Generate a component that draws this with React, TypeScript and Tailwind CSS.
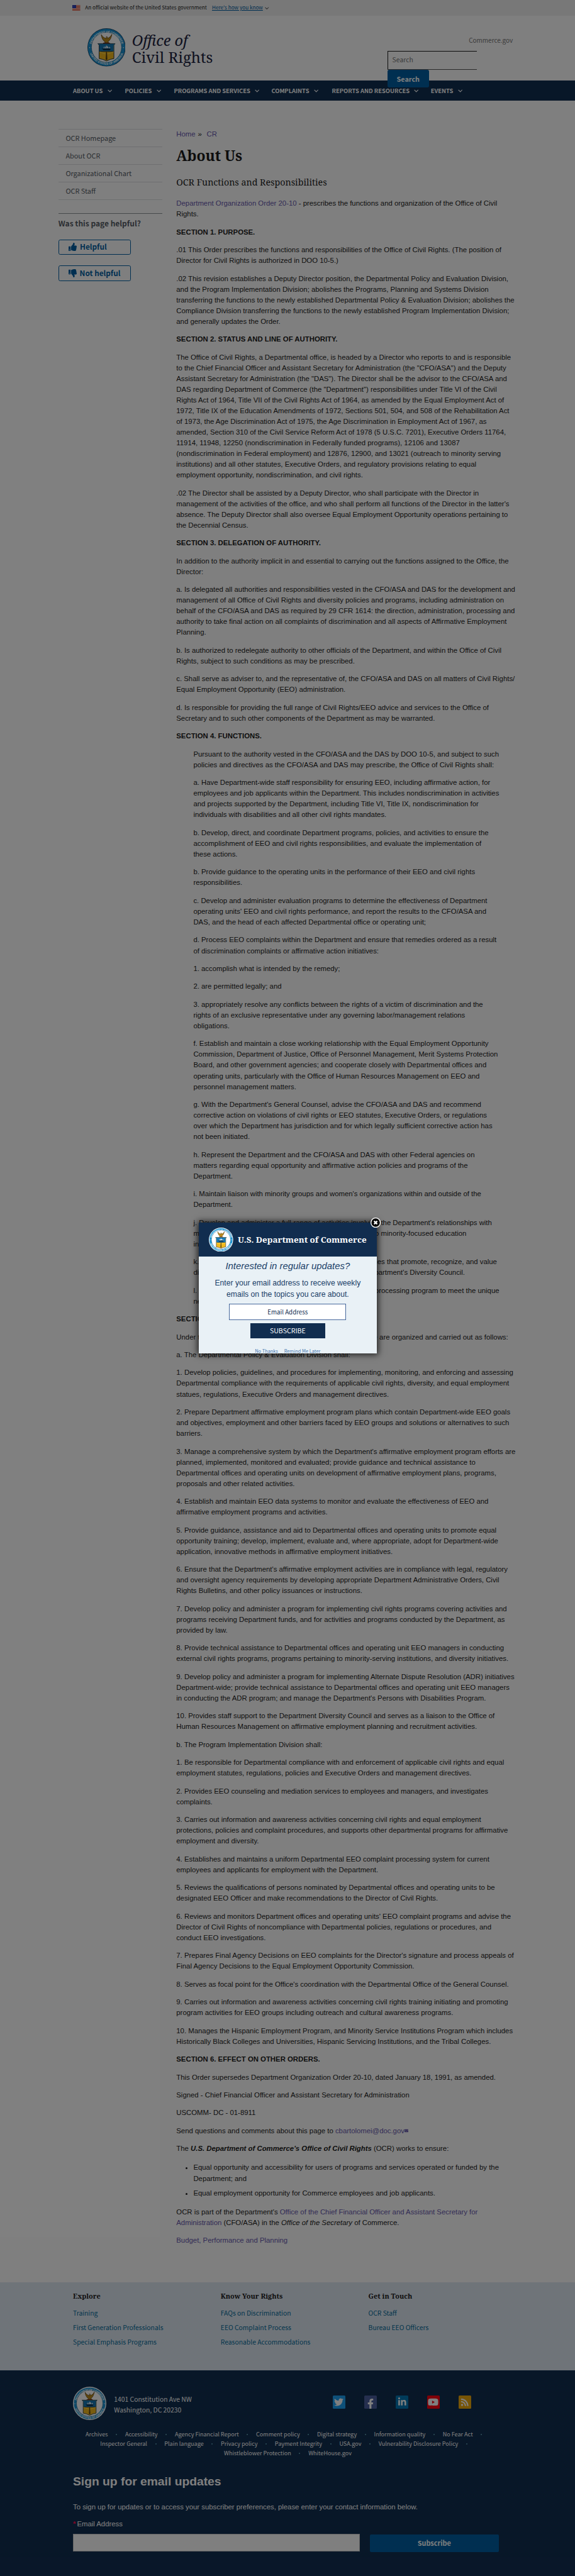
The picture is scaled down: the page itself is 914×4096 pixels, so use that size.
import { FaEnvelope, FaFacebookF, FaLinkedinIn, FaRss, FaThumbsDown, FaThumbsUp, FaTwitter, FaYoutube } from "react-icons/fa";
import type { ReactNode } from "react";

function Seal({ id, className, white }: { id: string; className: string; white?: boolean }) {
  return (
    <svg viewBox="0 0 268 268" className={className}>
      <circle cx="134" cy="134" r="134" fill={white ? "#ffffff" : "#123a5c"} />
      <circle cx="134" cy="134" r={white ? 127 : 131} fill="#1b93d2" />
      <circle cx="134" cy="134" r="106" fill="#ffffff" />
      <circle cx="134" cy="134" r="106" fill="none" stroke="#155c86" strokeWidth="3" />
      <path id={`${id}-top`} d="M24 142 A110 110 0 0 1 244 142" fill="none" />
      <path id={`${id}-bottom`} d="M8 130 A126 126 0 0 0 260 130" fill="none" />
      <text fill="#ffffff" fontSize="21" fontWeight="700" fontFamily="Liberation Sans, sans-serif" textLength="285">
        <textPath href={`#${id}-top`} startOffset="9%">DEPARTMENT OF COMMERCE</textPath>
      </text>
      <text fill="#ffffff" fontSize="21" fontWeight="700" fontFamily="Liberation Sans, sans-serif" textLength="300">
        <textPath href={`#${id}-bottom`} startOffset="12%">UNITED STATES OF AMERICA</textPath>
      </text>
      <circle cx="15" cy="136" r="3.5" fill="#fff" />
      <circle cx="253" cy="136" r="3.5" fill="#fff" />
      <path d="M97 44 C99 66 108 86 124 96 L120 102 H150 L145 95 C160 84 168 64 172 42 C162 60 152 66 143 70 L137 58 L129 60 L132 72 C118 68 105 58 97 44Z" fill="#b98a1d" stroke="#4a3410" strokeWidth="3" />
      <path d="M124 62 L133 57 L133 66Z" fill="#fff" />
      <path d="M110 104 H158" stroke="#7a2a1a" strokeWidth="5" />
      <path d="M73 108 H194 L186 118 V213 Q160 216 134 230 Q108 216 82 213 V118Z" fill="#f2b91d" stroke="#12293d" strokeWidth="4" />
      <path d="M76 110 H192 L184 119 V163 H84 V119Z" fill="#1779b5" />
      <path d="M84 163 H184" stroke="#12293d" strokeWidth="4" />
      <path d="M102 143 L166 143 L157 154 H113Z" fill="#0d2d47" />
      <path d="M112 140 L120 124 V140Z M122 140 L134 118 V140Z M136 140 V120 L150 138Z M152 140 V128 L163 140Z" fill="#ffffff" />
      <path d="M131 166 H137 L140 218 L134 224 L128 218Z" fill="#5a4212" />
      <path d="M84 166 L128 180 M184 166 L140 180" stroke="#ffd84d" strokeWidth="5" />
    </svg>
  );
}

function Flag() {
  return (
    <svg viewBox="0 0 19 13" className="h-[8.8px] w-[12.6px]">
      <rect width="19" height="13" fill="#ffffff" />
      <path d="M0 .9H19M0 3.7H19M0 6.5H19M0 9.3H19M0 12.1H19" stroke="#db3e1f" strokeWidth="1.6" />
      <rect width="9" height="7.4" fill="#1e33b1" />
      <path d="M1.5 1.5H8M1.5 3.7H8M1.5 5.9H8" stroke="#8fa0e8" strokeWidth=".7" strokeDasharray="1 1" />
    </svg>
  );
}

function Chevron({ className }: { className: string }) {
  return (
    <svg viewBox="0 0 12 8" className={className} fill="none" stroke="currentColor" strokeWidth="1.8">
      <path d="M1 1.2 L6 6.4 L11 1.2" />
    </svg>
  );
}

const sans = "font-['Noto_Sans_CJK_SC','Noto_Sans',sans-serif]";
const serif = "font-['Noto_Serif','Liberation_Serif',serif]";
const arial = "font-['Liberation_Sans',Arial,sans-serif]";

function P({ children }: { children: ReactNode }) {
  return <p className="mb-[11.374px] whitespace-pre">{children}</p>;
}

function H({ children }: { children: ReactNode }) {
  return <p className="mb-[11.374px] font-bold whitespace-pre">{children}</p>;
}

/* A run of text whose two ends sit at the edges of a box of fixed width. */
function Spread({ className, left, right }: { className: string; left: string; right: string }) {
  return (
    <span className={`inline-flex justify-between pr-[3.2px] ${className}`}>
      <span>{left}</span>
      <span>{right}</span>
    </span>
  );
}

function Link({ children }: { children: ReactNode }) {
  return <a className="text-[#6657ab]">{children}</a>;
}

const menu = ["ABOUT US", "POLICIES", "PROGRAMS AND SERVICES", "COMPLAINTS", "REPORTS AND RESOURCES", "EVENTS"];
const sideLinks = ["OCR Homepage", "About OCR", "Organizational Chart", "OCR Staff"];

const purpose = [
  `.01 This Order prescribes the functions and responsibilities of the Office of Civil Rights. (The position of
Director for Civil Rights is authorized in DOO 10-5.)`,
  `.02 This revision establishes a Deputy Director position, the Departmental Policy and Evaluation Division,
and the Program Implementation Division; abolishes the Programs, Planning and Systems Division
transferring the functions to the newly established Departmental Policy & Evaluation Division; abolishes the
Compliance Division transferring the functions to the newly established Program Implementation Division;
and generally updates the Order.`,
];

const status = [
  `The Office of Civil Rights, a Departmental office, is headed by a Director who reports to and is responsible
to the Chief Financial Officer and Assistant Secretary for Administration (the "CFO/ASA") and the Deputy
Assistant Secretary for Administration (the "DAS"). The Director shall be the advisor to the CFO/ASA and
DAS regarding Department of Commerce (the "Department") responsibilities under Title VI of the Civil
Rights Act of 1964, Title VII of the Civil Rights Act of 1964, as amended by the Equal Employment Act of
1972, Title IX of the Education Amendments of 1972, Sections 501, 504, and 508 of the Rehabilitation Act
of 1973, the Age Discrimination Act of 1975, the Age Discrimination in Employment Act of 1967, as
amended, Section 310 of the Civil Service Reform Act of 1978 (5 U.S.C. 7201), Executive Orders 11764,
11914, 11948, 12250 (nondiscrimination in Federally funded programs), 12106 and 13087
(nondiscrimination in Federal employment) and 12876, 12900, and 13021 (outreach to minority serving
institutions) and all other statutes, Executive Orders, and regulatory provisions relating to equal
employment opportunity, nondiscrimination, and civil rights.`,
  `.02 The Director shall be assisted by a Deputy Director, who shall participate with the Director in
management of the activities of the office, and who shall perform all functions of the Director in the latter's
absence. The Deputy Director shall also oversee Equal Employment Opportunity operations pertaining to
the Decennial Census.`,
];

const delegation = [
  `In addition to the authority implicit in and essential to carrying out the functions assigned to the Office, the
Director:`,
  `a. Is delegated all authorities and responsibilities vested in the CFO/ASA and DAS for the development and
management of all Office of Civil Rights and diversity policies and programs, including administration on
behalf of the CFO/ASA and DAS as required by 29 CFR 1614: the direction, administration, processing and
authority to take final action on all complaints of discrimination and all aspects of Affirmative Employment
Planning.`,
  `b. Is authorized to redelegate authority to other officials of the Department, and within the Office of Civil
Rights, subject to such conditions as may be prescribed.`,
  `c. Shall serve as adviser to, and the representative of, the CFO/ASA and DAS on all matters of Civil Rights/
Equal Employment Opportunity (EEO) administration.`,
  `d. Is responsible for providing the full range of Civil Rights/EEO advice and services to the Office of
Secretary and to such other components of the Department as may be warranted.`,
];

const functions = [
  `Pursuant to the authority vested in the CFO/ASA and the DAS by DOO 10-5, and subject to such
policies and directives as the CFO/ASA and DAS may prescribe, the Office of Civil Rights shall:`,
  `a. Have Department-wide staff responsibility for ensuring EEO, including affirmative action, for
employees and job applicants within the Department. This includes nondiscrimination in activities
and projects supported by the Department, including Title VI, Title IX, nondiscrimination for
individuals with disabilities and all other civil rights mandates.`,
  `b. Develop, direct, and coordinate Department programs, policies, and activities to ensure the
accomplishment of EEO and civil rights responsibilities, and evaluate the implementation of
these actions.`,
  `b. Provide guidance to the operating units in the performance of their EEO and civil rights
responsibilities.`,
  `c. Develop and administer evaluation programs to determine the effectiveness of Department
operating units' EEO and civil rights performance, and report the results to the CFO/ASA and
DAS, and the head of each affected Departmental office or operating unit;`,
  `d. Process EEO complaints within the Department and ensure that remedies ordered as a result
of discrimination complaints or affirmative action initiatives:`,
  `1. accomplish what is intended by the remedy;`,
  `2. are permitted legally; and`,
  `3. appropriately resolve any conflicts between the rights of a victim of discrimination and the
rights of an exclusive representative under any governing labor/management relations
obligations.`,
  `f. Establish and maintain a close working relationship with the Equal Employment Opportunity
Commission, Department of Justice, Office of Personnel Management, Merit Systems Protection
Board, and other government agencies; and cooperate closely with Departmental offices and
operating units, particularly with the Office of Human Resources Management on EEO and
personnel management matters.`,
  `g. With the Department's General Counsel, advise the CFO/ASA and DAS and recommend
corrective action on violations of civil rights or EEO statutes, Executive Orders, or regulations
over which the Department has jurisdiction and for which legally sufficient corrective action has
not been initiated.`,
  `h. Represent the Department and the CFO/ASA and DAS with other Federal agencies on
matters regarding equal opportunity and affirmative action policies and programs of the
Department.`,
  `i. Maintain liaison with minority groups and women's organizations within and outside of the
Department.`,
];

const divisions = [
  `a. The Departmental Policy & Evaluation Division shall:`,
  `1. Develop policies, guidelines, and procedures for implementing, monitoring, and enforcing and assessing
Departmental compliance with the requirements of applicable civil rights, diversity, and equal employment
statues, regulations, Executive Orders and management directives.`,
  `2. Prepare Department affirmative employment program plans which contain Department-wide EEO goals
and objectives, employment and other barriers faced by EEO groups and solutions or alternatives to such
barriers.`,
  `3. Manage a comprehensive system by which the Department's affirmative employment program efforts are
planned, implemented, monitored and evaluated; provide guidance and technical assistance to
Departmental offices and operating units on development of affirmative employment plans, programs,
proposals and other related activities.`,
  `4. Establish and maintain EEO data systems to monitor and evaluate the effectiveness of EEO and
affirmative employment programs and activities.`,
  `5. Provide guidance, assistance and aid to Departmental offices and operating units to promote equal
opportunity training; develop, implement, evaluate and, where appropriate, adopt for Department-wide
application, innovative methods in affirmative employment initiatives.`,
  `6. Ensure that the Department's affirmative employment activities are in compliance with legal, regulatory
and oversight agency requirements by developing appropriate Department Administrative Orders, Civil
Rights Bulletins, and other policy issuances or instructions.`,
  `7. Develop policy and administer a program for implementing civil rights programs covering activities and
programs receiving Department funds, and for activities and programs conducted by the Department, as
provided by law.`,
  `8. Provide technical assistance to Departmental offices and operating unit EEO managers in conducting
external civil rights programs, programs pertaining to minority-serving institutions, and diversity initiatives.`,
  `9. Develop policy and administer a program for implementing Alternate Dispute Resolution (ADR) initiatives
Department-wide; provide technical assistance to Departmental offices and operating unit EEO managers
in conducting the ADR program; and manage the Department's Persons with Disabilities Program.`,
  `10. Provides staff support to the Department Diversity Council and serves as a liaison to the Office of
Human Resources Management on affirmative employment planning and recruitment activities.`,
  `b. The Program Implementation Division shall:`,
  `1. Be responsible for Departmental compliance with and enforcement of applicable civil rights and equal
employment statutes, regulations, policies and Executive Orders and management directives.`,
  `2. Provides EEO counseling and mediation services to employees and managers, and investigates
complaints.`,
  `3. Carries out information and awareness activities concerning civil rights and equal employment
protections, policies and complaint procedures, and supports other departmental programs for affirmative
employment and diversity.`,
  `4. Establishes and maintains a uniform Departmental EEO complaint processing system for current
employees and applicants for employment with the Department.`,
  `5. Reviews the qualifications of persons nominated by Departmental offices and operating units to be
designated EEO Officer and make recommendations to the Director of Civil Rights.`,
  `6. Reviews and monitors Department offices and operating units' EEO complaint programs and advise the
Director of Civil Rights of noncompliance with Departmental policies, regulations or procedures, and
conduct EEO investigations.`,
  `7. Prepares Final Agency Decisions on EEO complaints for the Director's signature and process appeals of
Final Agency Decisions to the Equal Employment Opportunity Commission.`,
  `8. Serves as focal point for the Office's coordination with the Departmental Office of the General Counsel.`,
  `9. Carries out information and awareness activities concerning civil rights training initiating and promoting
program activities for EEO groups including outreach and cultural awareness programs.`,
  `10. Manages the Hispanic Employment Program, and Minority Service Institutions Program which includes
Historically Black Colleges and Universities, Hispanic Servicing Institutions, and the Tribal Colleges.`,
];

const footerColumns = [
  { title: "Explore", links: ["Training", "First Generation Professionals", "Special Emphasis Programs"] },
  { title: "Know Your Rights", links: ["FAQs on Discrimination", "EEO Complaint Process", "Reasonable Accommodations"] },
  { title: "Get in Touch", links: ["OCR Staff", "Bureau EEO Officers"] },
];

const footerRows = [
  ["Archives", "Accessibility", "Agency Financial Report", "Comment policy", "Digital strategy", "Information quality", "No Fear Act"],
  ["Inspector General", "Plain language", "Privacy policy", "Payment Integrity", "USA.gov", "Vulnerability Disclosure Policy"],
  ["Whistleblower Protection", "WhiteHouse.gov"],
];

const social = [
  { name: "Twitter", icon: <FaTwitter className="size-[15px]" />, box: "items-center bg-[#1da1f2]" },
  { name: "Facebook", icon: <FaFacebookF className="size-[16px]" />, box: "items-end bg-[#4a5f9e]" },
  { name: "LinkedIn", icon: <FaLinkedinIn className="size-[14.5px]" />, box: "items-center bg-[#0077b5]" },
  { name: "YouTube", icon: <FaYoutube className="size-[17px]" />, box: "items-center bg-[#ff0010]" },
  { name: "RSS", icon: <FaRss className="size-[13.5px]" />, box: "items-center bg-[#eda80c]" },
];

function Header() {
  return (
    <>
      <div className={`flex h-[25.3px] items-center bg-[#f0f0f0] pb-[0.9px] pl-[115.3px] text-[8.17px] leading-[12px] text-[#1b1b1b] ${sans}`}>
        <Flag />
        <span className="ml-[7.4px]">An official website of the United States government</span>
        <a className="ml-[8.2px] text-[#005ea2] underline">Here's how you know</a>
        <Chevron className="ml-[3.4px] mt-[1px] h-[4.4px] w-[6.4px]" />
      </div>
      <header className="flex h-[102.7px]">
        <Seal id="seal-header" className="mt-[19.9px] ml-[138.6px] size-[60.6px]" />
        <div className={`mt-[27.2px] ml-[10.6px] leading-[25.5px] text-[#1c2340] ${serif}`}>
          <div className="text-[23.6px] italic">Office of</div>
          <div className="text-[24px]">Civil Rights</div>
        </div>
        <div className={`relative mr-[98.7px] ml-auto flex w-[199.3px] flex-col items-start text-[10.4px] leading-[14px] ${sans}`}>
          <a className="mt-[32px] shrink-0 self-end text-[10px] text-[#757575]">Commerce.gov</a>
          <div className="mt-[9.3px] flex h-[30.8px] w-[141.8px] shrink-0 items-center border-t-[1.4px] border-b-[1.4px] border-l-[1.4px] border-t-[#1b1b1b] border-b-[#565656] border-l-[#1b1b1b] pb-[1px] pl-[6.6px] text-[#757575]">
            Search
          </div>
          <button className="mt-[-0.4px] h-[28.3px] w-[65.6px] shrink-0 rounded-[2.7px] bg-[#005ea2] pb-[1px] text-[10.8px] font-bold text-white">Search</button>
        </div>
      </header>
      <nav className={`grid h-[31.8px] grid-cols-[82.6px_77.9px_154.9px_96.2px_157.1px_auto] items-center bg-[#112e51] pl-[116px] pb-[0.6px] text-[9.4px] leading-[14px] font-bold text-white ${sans}`}>
        {menu.map((m) => (
          <a key={m} className="flex items-center gap-[7.2px] whitespace-nowrap">
            {m}
            <Chevron className="mt-[1px] h-[5px] w-[7.4px]" />
          </a>
        ))}
      </nav>
    </>
  );
}

function Sidebar() {
  return (
    <aside className={`mt-[45.6px] ml-[92.8px] w-[165px] text-[#565c65] ${sans}`}>
      <ul className="border-b border-[#dcdee0] text-[10.9px] leading-[16px]">
        {sideLinks.map((s) => (
          <li key={s} className="flex h-[27.8px] items-center border-t border-[#dcdee0] pb-[1px] pl-[11.6px]">
            {s}
          </li>
        ))}
      </ul>
      <div className="mt-[21.2px] h-px bg-[#8d9297]" />
      <p className="mt-[6.6px] text-[12px] leading-[18px] font-bold">Was this page helpful?</p>
      <button className="mt-[16.2px] flex h-[24.8px] w-[115.6px] items-center rounded-[2.7px] border-[1.4px] border-[#005ea2] pl-[14.8px] text-[11.8px] leading-[16px] font-bold text-[#005ea2]">
        <FaThumbsUp className="mr-[5.4px] size-[13px]" />
        <span className="-mt-[1px]">Helpful</span>
      </button>
      <button className="mt-[16.4px] flex h-[24.8px] w-[115.6px] items-center rounded-[2.7px] border-[1.4px] border-[#005ea2] pl-[14.8px] text-[11.8px] leading-[16px] font-bold whitespace-nowrap text-[#005ea2]">
        <FaThumbsDown className="mr-[5px] size-[13px]" />
        <span className="-mt-[1px]">Not helpful</span>
      </button>
    </aside>
  );
}

function Article() {
  return (
    <article className={`mt-[45.7px] ml-[22.5px] text-[11.374px] leading-[17.061px] text-[#1b1b1b] ${arial}`}>
      <div className="flex">
        <Link>Home</Link>
        <span className="ml-[4px]">»</span>
        <span className="ml-[7.6px]">
          <Link>CR</Link>
        </span>
      </div>
      <h1 className={`mt-[11px] text-[22.9px] leading-[28px] font-bold ${serif}`}>About Us</h1>
      <h2 className={`mt-[18.2px] mb-[15.4px] text-[14.25px] leading-[20px] ${serif}`}>OCR Functions and Responsibilities</h2>
      <P>
        <Link>Department Organization Order 20-10</Link>
        {" - prescribes the functions and organization of the Office of Civil\nRights."}
      </P>
      <H>SECTION 1. PURPOSE.</H>
      {purpose.map((t) => <P key={t}>{t}</P>)}
      <H>SECTION 2. STATUS AND LINE OF AUTHORITY.</H>
      {status.map((t) => <P key={t}>{t}</P>)}
      <H>SECTION 3. DELEGATION OF AUTHORITY.</H>
      {delegation.map((t) => <P key={t}>{t}</P>)}
      <H>SECTION 4. FUNCTIONS.</H>
      <blockquote className="ml-[27.1px]">
        {functions.map((t) => <P key={t}>{t}</P>)}
        <P>
          {"j. Develop and administer a full-range of activities involving the Department's relationships with\n"}
          <Spread className="w-[298.2px]" left="minority-serving institutions and" right="with respect to" />
          {"minority-focused education\ninitiatives."}
        </P>
        <P>
          <Spread className="w-[307.6px]" left="k. Develop and administer" right="programs and activities" />
          {"that promote, recognize, and value\n"}
          <Spread className="w-[343.9px]" left="diversity, and provide support" right="to the Department's" />
          {"Diversity Council."}
        </P>
        <P>
          <Spread className="w-[346.6px]" left="l. Develop and administer a" right="complaint processing" />
          {"program to meet the unique\nneeds of the Department."}
        </P>
      </blockquote>
      <H>SECTION 5. IMPLEMENTATION.</H>
      <P>
        <Spread className="w-[322.8px]" left="Under the direction of the Director," right="functions of the Office" />
        {"are organized and carried out as follows:"}
      </P>
      {divisions.map((t) => <P key={t}>{t}</P>)}
      <H>SECTION 6. EFFECT ON OTHER ORDERS.</H>
      <P>This Order supersedes Department Organization Order 20-10, dated January 18, 1991, as amended.</P>
      <P>Signed - Chief Financial Officer and Assistant Secretary for Administration</P>
      <P>USCOMM- DC - 01-8911</P>
      <P>
        {"Send questions and comments about this page to "}
        <Link>
          cbartolomei@doc.gov
          <FaEnvelope className="inline size-[6px] align-[1px]" />
        </Link>
      </P>
      <P>
        {"The "}
        <b className="italic">U.S. Department of Commerce's Office of Civil Rights</b>
        {" (OCR) works to ensure:"}
      </P>
      <ul className="mb-[12px] ml-[27.1px] list-disc leading-[18.2px] marker:text-[9px]">
        <li className="mb-[5.4px] whitespace-pre">{"Equal opportunity and accessibility for users of programs and services operated or funded by the\nDepartment; and"}</li>
        <li>Equal employment opportunity for Commerce employees and job applicants.</li>
      </ul>
      <P>
        {"OCR is part of the Department's "}
        <Link>{"Office of the Chief Financial Officer and Assistant Secretary for\nAdministration"}</Link>
        {" (CFO/ASA) in the "}
        <i>Office of the Secretary</i>
        {" of Commerce."}
      </P>
      <P>
        <Link>Budget, Performance and Planning</Link>
      </P>
    </article>
  );
}

function Footer() {
  return (
    <footer>
      <div className={`grid h-[140px] grid-cols-[234.8px_234.8px_auto] bg-[#dfe8f3] pt-[14.3px] pl-[116px] ${sans}`}>
        {footerColumns.map((c) => (
          <div key={c.title}>
            <h3 className={`mb-[7.2px] text-[10.95px] leading-[16px] font-bold text-[#1b1b1b] ${serif}`}>{c.title}</h3>
            {c.links.map((l) => (
              <a key={l} className="block text-[10.33px] leading-[23.05px] text-[#046b99]">{l}</a>
            ))}
          </div>
        ))}
      </div>
      <div className={`h-[327.2px] bg-[#112e51] pl-[116px] text-white ${sans}`}>
        <div className="flex pt-[26.3px]">
          <Seal id="seal-footer" white className="size-[53px]" />
          <p className="mt-[10.6px] ml-[12.3px] w-[200px] text-[10.33px] leading-[17.8px]">
            1401 Constitution Ave NW
            <br />
            Washington, DC 20230
          </p>
          <div className="mt-[14.3px] ml-[147.5px] flex gap-[29.85px]">
            {social.map((s) => (
              <a key={s.name} aria-label={s.name} className={`flex size-[20.2px] justify-center rounded-[1.5px] ${s.box}`}>
                {s.icon}
              </a>
            ))}
          </div>
        </div>
        <div className="mt-[15.1px] -ml-[116px] text-[9.07px] leading-[15.1px]">
          {footerRows.map((row, r) => (
            <div key={r} className="flex justify-center pl-[1px]">
              {row.map((l, i) => (
                <span key={l} className="flex items-center">
                  {l}
                  {(r < 2 || i < row.length - 1) && <span className="mx-[12.7px] mt-[1px] size-[2px] rounded-full bg-[#5f9fb5]" />}
                </span>
              ))}
            </div>
          ))}
        </div>
        <div className={`text-[11.35px] leading-[16px] ${arial}`}>
          <h2 className="mt-[25.8px] text-[19.27px] leading-[24px] font-bold">Sign up for email updates</h2>
          <p className="mt-[19.4px]">To sign up for updates or to access your subscriber preferences, please enter your contact information below.</p>
          <label className="mt-[11.4px] flex">
            <span className="w-[6.4px] font-bold text-[#ff0a4e]">*</span>Email Address
          </label>
        </div>
        <div className="mt-[8px] flex items-start">
          <div className="h-[27.8px] w-[456.4px] border border-[#c9c9c9] bg-white" />
          <button className="mt-[0.8px] ml-[15.3px] h-[28.4px] w-[205.1px] rounded-[2px] bg-[#005ea2] pb-[1.5px] text-[10.85px] leading-[16px] font-bold">
            Subscribe
          </button>
        </div>
      </div>
    </footer>
  );
}

function SubscribeDialog() {
  return (
    <div className="absolute top-[1943.8px] left-[315.5px] h-[208.5px] w-[283.7px] bg-[#e9f1f6] text-center text-[#112e51] shadow-[0_0_10px_2px_rgba(0,0,0,0.75)]">
      <svg viewBox="0 0 24 24" className="absolute -top-[8px] -right-[6.4px] size-[16.2px]">
        <circle cx="12" cy="12" r="11" fill="#000" stroke="#fff" strokeWidth="2" />
        <path d="M8.4 8.4 L15.6 15.6 M15.6 8.4 L8.4 15.6" stroke="#fff" strokeWidth="3.4" />
      </svg>
      <div className="flex h-[54.6px] items-center bg-[#112d4f] pl-[16.9px]">
        <Seal id="seal-dialog" white className="size-[38.6px]" />
        <span className={`ml-[7px] text-[13.4px] font-bold whitespace-nowrap text-white ${serif}`}>U.S. Department of Commerce</span>
      </div>
      <div className={`h-[153.9px] overflow-hidden ${sans}`}>
        <p className={`mt-[6px] text-[14.9px] leading-[18px] text-[#1a4068] italic ${arial}`}>Interested in regular updates?</p>
        <p className={`mt-[8.3px] text-[12.16px] leading-[18.3px] text-[#1a4068] ${arial}`}>
          Enter your email address to receive weekly
          <br />
          emails on the topics you care about.
        </p>
        <div className="mx-auto mt-[6.2px] flex h-[25.7px] w-[186px] items-center justify-center border border-[#46689c] bg-white pb-[1px] text-[9.75px]">Email Address</div>
        <button className="mx-auto mt-[4.7px] block h-[24.6px] w-[118.4px] bg-[#112d4f] pb-[1px] text-[10.6px] text-white">SUBSCRIBE</button>
        <div className="mt-[13.6px] flex justify-center gap-[9.8px] text-[7.4px] leading-[12px] text-[#3f73ad]">
          <a>No Thanks</a>
          <a>Remind Me Later</a>
        </div>
      </div>
    </div>
  );
}

export default function App() {
  return (
    <div className="relative h-[4096px] w-[914px] overflow-hidden bg-white">
      <Header />
      <main className="flex h-[3469px] items-start">
        <Sidebar />
        <Article />
      </main>
      <Footer />
      <div className="absolute inset-0 bg-black/50" />
      <SubscribeDialog />
    </div>
  );
}
